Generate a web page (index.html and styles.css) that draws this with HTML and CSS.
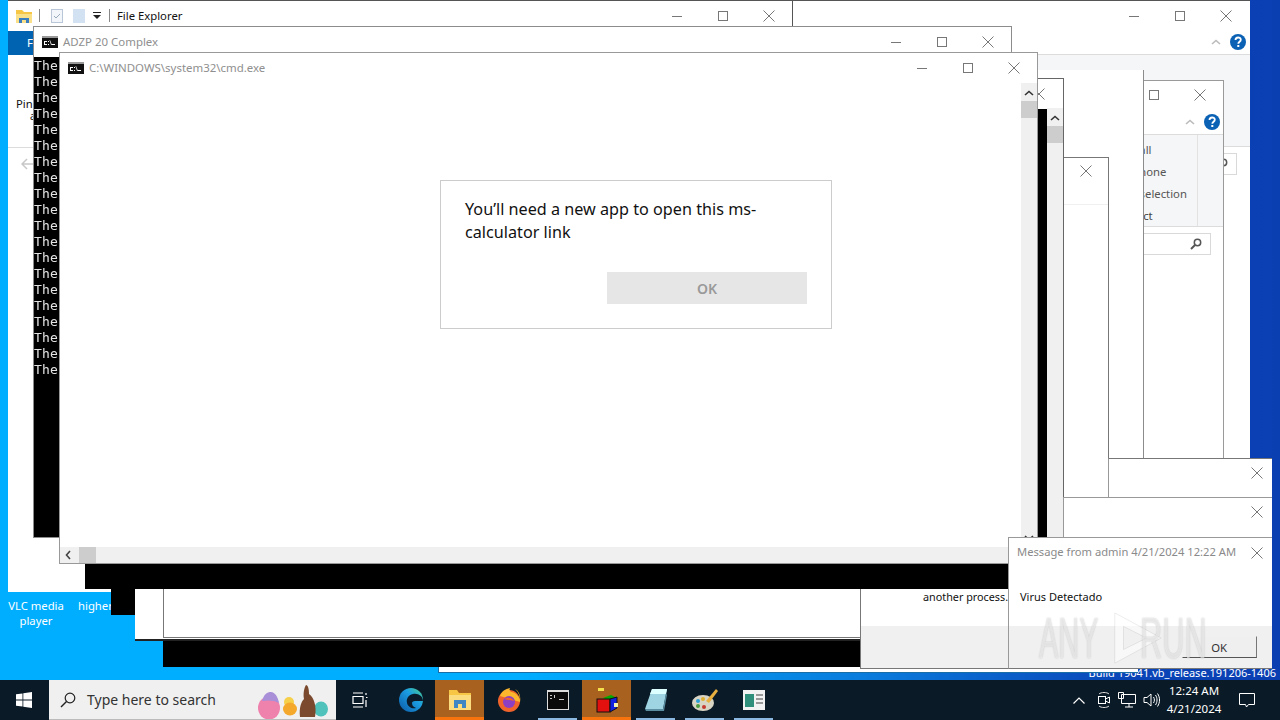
FILE: index.html
```html
<!DOCTYPE html>
<html lang="en">
<head>
  <meta charset="UTF-8" />
  <title>Desktop</title>
  <link rel="stylesheet" href="styles.css">
</head>
<body>
  <svg class="defs" width="0" height="0">
    <symbol id="i-close" viewBox="0 0 12 12"><path d="M.5.5l11 11M11.5.5l-11 11" fill="none" stroke="currentColor"/></symbol>
    <symbol id="i-max" viewBox="0 0 12 12"><rect x="1.5" y="1.5" width="9" height="9" fill="none" stroke="currentColor"/></symbol>
    <symbol id="i-min" viewBox="0 0 12 12"><path d="M1 6.5h10" fill="none" stroke="currentColor"/></symbol>
    <symbol id="i-up" viewBox="0 0 10 6"><path d="M1 5l4-3.5L9 5" fill="none" stroke="currentColor" stroke-width="1.6"/></symbol>
    <symbol id="i-cmd" viewBox="0 0 16 12"><rect width="16" height="12" fill="#111"/><rect width="16" height="2" fill="#999"/><path d="M2 5h3v1H3v2h2v1H2zM6 5h1v1H6zM6 8h1v1H6zM8 4l2 5h-1L7.500 4zM10 8h3v1h-3z" fill="#fff"/></symbol>
    <symbol id="i-search" viewBox="0 0 12 12"><circle cx="7.500" cy="4.500" r="3.200" fill="none" stroke="#555" stroke-width="1.500"/><path d="M5 7l-4 4" stroke="#555" stroke-width="2"/></symbol>
    <symbol id="i-help" viewBox="0 0 16 16"><circle cx="8" cy="8" r="8" fill="#0b62b5"/><path d="M5.500 6c0-3.300 5.300-3.300 5.300-.2 0 2-2.500 2-2.500 4" fill="none" stroke="#fff" stroke-width="1.800"/><rect x="7.300" y="11" width="2" height="2" fill="#fff"/></symbol>
  </svg>

  <div class="desktop">
    <span class="build-info">Build 19041.vb_release.191206-1406</span>

    <div class="icon-label vlc-label">VLC media player</div>
    <div class="icon-label higher-label">higher</div>

    <!-- explorer windows at the back -->
    <section class="win win-back">
      <div class="title-bar">
        <span class="spacer"></span>
        <span class="ctl"><svg class="ico"><use href="#i-min"/></svg></span>
        <span class="ctl"><svg class="ico"><use href="#i-max"/></svg></span>
        <span class="ctl"><svg class="ico"><use href="#i-close"/></svg></span>
      </div>
      <div class="tab-row">
        <svg class="ribbon-up"><use href="#i-up"/></svg>
        <svg class="help"><use href="#i-help"/></svg>
      </div>
      <div class="ribbon"></div>
      <div class="address-row"><div class="search-box"><svg class="search-ico"><use href="#i-search"/></svg></div></div>
    </section>

    <section class="win win-explorer">
      <div class="title-bar">
        <svg class="folder" viewBox="0 0 16 14">
          <path d="M0 1h6l2 2h8v11H0z" fill="#f6c644"/>
          <rect y="5" width="16" height="9" fill="#fbe08a"/>
          <path d="M3 14V9h10v5h-3v-3H6v3z" fill="#3a7ebf"/>
        </svg>
        <span class="qa-sep"></span>
        <svg class="qa-doc" viewBox="0 0 12 14"><rect x=".5" y=".5" width="11" height="13" fill="#f2f6fb" stroke="#b8c6d8"/><path d="M3 7l2 2 4-4" fill="none" stroke="#9ab" /></svg>
        <svg class="qa-doc qa-blank" viewBox="0 0 12 14"><rect width="12" height="14" fill="#d3e2f3"/></svg>
        <svg class="qa-drop" viewBox="0 0 8 7"><path d="M0 0h8v1H0zM0 3h8L4 7z" fill="#222"/></svg>
        <span class="qa-sep qa-sep-2"></span>
        <span class="title-dark">File Explorer</span>
        <span class="spacer"></span>
        <span class="ctl"><svg class="ico"><use href="#i-min"/></svg></span>
        <span class="ctl"><svg class="ico"><use href="#i-max"/></svg></span>
        <span class="ctl"><svg class="ico"><use href="#i-close"/></svg></span>
      </div>
      <div class="file-tab">F</div>
      <div class="pin-area">
        <span>Pin</span>
        <span class="pin-tail">a</span>
      </div>
      <div class="nav-row"><svg class="back-arrow" viewBox="0 0 14 12"><path d="M6 1L1 6l5 5M1 6h13" fill="none" stroke="#c8c8c8" stroke-width="1.500"/></svg></div>
    </section>

    <section class="win win-sliver"></section>

    <section class="win win-select">
      <div class="title-bar">
        <span class="spacer"></span>
        <span class="ctl"><svg class="ico"><use href="#i-max"/></svg></span>
        <span class="ctl"><svg class="ico"><use href="#i-close"/></svg></span>
      </div>
      <div class="tab-row">
        <svg class="ribbon-up"><use href="#i-up"/></svg>
        <svg class="help"><use href="#i-help"/></svg>
      </div>
      <div class="ribbon">
        <div class="select-group">
          <span>Select all</span>
          <span>Select none</span>
          <span>Invert selection</span>
          <span class="group-label">Select</span>
        </div>
      </div>
      <div class="address-row"><div class="search-box"><svg class="search-ico"><use href="#i-search"/></svg></div></div>
    </section>

    <section class="win win-blank-g"></section>

    <section class="win win-f">
      <div class="title-bar"><span class="spacer"></span><span class="ctl"><svg class="ico"><use href="#i-close"/></svg></span></div>
    </section>

    <section class="win win-h">
      <div class="title-bar"><span class="spacer"></span><span class="ctl"><svg class="ico"><use href="#i-close"/></svg></span></div>
      <div class="console-strip"></div>
      <div class="vscroll"><svg class="chev"><use href="#i-up"/></svg><div class="thumb"></div></div>
    </section>

    <section class="win win-c">
      <div class="title-bar"><span class="spacer"></span><span class="ctl"><svg class="ico"><use href="#i-close"/></svg></span></div>
    </section>
    <section class="win win-d">
      <div class="title-bar"><span class="spacer"></span><span class="ctl"><svg class="ico"><use href="#i-close"/></svg></span></div>
    </section>

    <!-- stack of cmd windows peeking out underneath -->
    <section class="win win-low-black"></section>
    <section class="win win-low-white"><div class="low-inner"></div></section>
    <section class="win win-bar-1"></section>
    <section class="win win-bar-2"></section>

    <section class="win win-process">
      <p class="process-text">another process.</p>
      <div class="msg-foot"></div>
    </section>

    <section class="win win-adzp">
      <div class="title-bar">
        <svg class="cmd-ico"><use href="#i-cmd"/></svg>
        <span class="title-grey">ADZP 20 Complex</span>
        <span class="spacer"></span>
        <span class="ctl"><svg class="ico"><use href="#i-min"/></svg></span>
        <span class="ctl"><svg class="ico"><use href="#i-max"/></svg></span>
        <span class="ctl"><svg class="ico"><use href="#i-close"/></svg></span>
      </div>
      <pre class="console">The
The
The
The
The
The
The
The
The
The
The
The
The
The
The
The
The
The
The
The</pre>
    </section>

    <section class="win win-main">
      <div class="title-bar">
        <svg class="cmd-ico"><use href="#i-cmd"/></svg>
        <span class="title-grey">C:\WINDOWS\system32\cmd.exe</span>
        <span class="spacer"></span>
        <span class="ctl"><svg class="ico"><use href="#i-min"/></svg></span>
        <span class="ctl"><svg class="ico"><use href="#i-max"/></svg></span>
        <span class="ctl"><svg class="ico"><use href="#i-close"/></svg></span>
      </div>
      <div class="main-body">
        <div class="vscroll"><svg class="chev"><use href="#i-up"/></svg><div class="thumb"></div><span class="spacer"></span><svg class="chev chev-down"><use href="#i-up"/></svg></div>
      </div>
      <div class="hscroll">
        <svg class="chev-left" viewBox="0 0 6 10"><path d="M5 1L1.500 5 5 9" fill="none" stroke="#444" stroke-width="1.600"/></svg>
        <div class="hthumb"></div>
      </div>
    </section>

    <div class="app-dialog">
      <p>You’ll need a new app to open this ms-calculator link</p>
      <div class="dialog-actions"><button class="dialog-ok">OK</button></div>
    </div>

    <section class="win win-message">
      <div class="title-bar">
        <span class="msg-title">Message from admin 4/21/2024 12:22 AM</span>
        <span class="spacer"></span>
        <span class="ctl"><svg class="ico"><use href="#i-close"/></svg></span>
      </div>
      <p class="msg-text">Virus Detectado</p>
      <div class="msg-foot"><button class="msg-ok">OK</button></div>
    </section>

    <div class="watermark">
      <span class="wm-word wm-any">ANY</span>
      <svg class="wm-play" viewBox="0 0 60 60"><path d="M6 4l48 26L6 56zM15 18v24l24-12z" fill="#fff" fill-opacity=".55" fill-rule="evenodd" stroke="#000" stroke-opacity=".08"/></svg>
      <span class="wm-word wm-run">RUN</span>
    </div>
  </div>

  <footer class="taskbar">
    <div class="start">
      <svg viewBox="0 0 16 16" width="16" height="16"><path d="M0 2.300l6.500-.9v6.200H0zM7.300 1.300L16 0v7.600H7.300zM0 8.400h6.500v6.200L0 13.700zM7.300 8.400H16V16l-8.700-1.200z" fill="#fff"/></svg>
    </div>
    <div class="search">
      <svg class="search-glass" viewBox="0 0 16 16"><circle cx="10" cy="6" r="4.800" fill="none" stroke="#222" stroke-width="1.200"/><path d="M6.500 9.500L1 15" stroke="#222" stroke-width="1.500"/></svg>
      <span>Type here to search</span>
      <svg class="easter" viewBox="0 0 78 36">
        <ellipse cx="11" cy="25" rx="11" ry="11.500" fill="#ee82ad"/>
        <path d="M4 18c2-7 5-9 9-9s7 5 8 11c-5-3-11-3-17-2z" fill="#a88fd8"/>
        <ellipse cx="63" cy="26" rx="7" ry="7.500" fill="#4fc2bb"/>
        <circle cx="31" cy="19" r="5" fill="#f6d04a"/>
        <ellipse cx="32" cy="26" rx="7" ry="6.500" fill="#f4a92c"/>
        <path d="M42 34c-1-9 1-15 4-18-1-5 0-11 2-14 2 0 3 4 3 9 5 3 8 13 6 23z" fill="#7b4a2e"/>
      </svg>
    </div>
    <div class="task-btn task-view">
      <svg viewBox="0 0 16 16" width="16" height="16"><path d="M1 1h10M1 15h10M1 4.500h10v7H1zM14 1v2M14 5.500h1.500M14 8v7" fill="none" stroke="#fff" stroke-width="1.200"/></svg>
    </div>
    <div class="task-btn">
      <svg viewBox="0 0 24 24" width="24" height="24">
        <defs><linearGradient id="edge-g" x1="0" y1="1" x2="1" y2="0"><stop offset="0" stop-color="#0c59a4"/><stop offset=".6" stop-color="#1b9de2"/><stop offset="1" stop-color="#4ed08b"/></linearGradient></defs>
        <circle cx="12" cy="12" r="12" fill="url(#edge-g)"/>
        <path d="M24 13c0-5-5-8-10-7-5 1-7 5-6 9 1 4 5 6 9 5-3-1-4-3-4-5 0-1 1-2 3-2h8z" fill="#0b1b29"/>
      </svg>
    </div>
    <div class="task-btn is-active">
      <svg viewBox="0 0 22 20" width="22" height="20"><path d="M0 0h8l2 3h12v17H0z" fill="#f6c644"/><rect y="5" width="22" height="15" fill="#fbdc7e"/><path d="M5 18v-8h12v8h-4v-4H9v4z" fill="#3f86c4"/></svg>
    </div>
    <div class="task-btn">
      <svg viewBox="0 0 24 24" width="24" height="24"><circle cx="12" cy="13" r="11" fill="#f0642c"/><path d="M3 8C5 3 8 1 13 0c-1 2 0 3 1 4 4 0 8 4 9 8 0-4-2-9-5-11 4 2 6 7 5 13z" fill="#fdb72c"/><circle cx="12" cy="14" r="6" fill="#8d3fc4"/><path d="M7 11c3-2 8-2 10 2-3-1-7-1-10-2z" fill="#f0642c"/></svg>
    </div>
    <div class="task-btn has-line">
      <svg viewBox="0 0 22 20" width="22" height="20"><rect width="22" height="20" fill="#ddd"/><rect x="1" y="2" width="20" height="17" fill="#0a0a0a"/><path d="M3 5h2v1H3zM3 8h2v1H3zM7 5h1v3H7zM12 9h5v1h-5z" fill="#ccc"/></svg>
    </div>
    <div class="task-btn is-active">
      <svg viewBox="0 0 26 26" width="26" height="26">
        <path d="M9 11l8-3 6 3-7 3z" fill="#0a0"/>
        <rect x="3" y="12" width="13" height="13" fill="#e31010" stroke="#111"/>
        <path d="M16 12l7-2v11l-7 4z" fill="#1220e0" stroke="#111"/>
        <path d="M4 1h6v3H4z" fill="#f4e04a"/><path d="M20 16h4v4h-4z" fill="#f7f4b0"/>
      </svg>
    </div>
    <div class="task-btn has-line">
      <svg viewBox="0 0 24 24" width="24" height="24"><path d="M8 1h15l-4 20H1z" fill="#9fd4e2"/><path d="M8 1h15l-1 5H6z" fill="#dff"/><path d="M1 21h18l3-16 1 2-3 16H2z" fill="#5a8ea0"/></svg>
    </div>
    <div class="task-btn has-line">
      <svg viewBox="0 0 26 24" width="26" height="24"><ellipse cx="11" cy="15" rx="11" ry="8" fill="#d9d5c4"/><circle cx="6" cy="13" r="2" fill="#2d9fd8"/><circle cx="11" cy="11" r="2" fill="#e0b030"/><circle cx="6" cy="18" r="2" fill="#4a9a40"/><circle cx="12" cy="19" r="2" fill="#c43a30"/><path d="M14 13L24 1l2 2-9 12z" fill="#e8b040"/></svg>
    </div>
    <div class="task-btn has-line">
      <svg viewBox="0 0 22 20" width="22" height="20"><rect width="22" height="20" fill="#f2f2f2"/><rect x="2" y="4" width="9" height="13" fill="#2f8f7a"/><path d="M13 4h7v2h-7zM13 8h7v2h-7zM13 12h7v2h-7z" fill="#999"/></svg>
    </div>
    <span class="spacer"></span>
    <div class="tray">
      <svg class="tray-chev" viewBox="0 0 12 7"><path d="M.5 6.500L6 1l5.500 5.500" fill="none" stroke="#fff" stroke-width="1.200"/></svg>
      <svg class="tray-ico" viewBox="0 0 14 18"><path d="M2 3c2-2 8-2 10 0M2 15c2 2 8 2 10 0" fill="none" stroke="#ddd"/><rect x="1.500" y="5.500" width="7" height="7" fill="none" stroke="#fff"/><path d="M8.500 8l4-2v6l-4-2" fill="none" stroke="#fff"/></svg>
      <svg class="tray-ico tray-net" viewBox="0 0 18 16"><path d="M3.500 2.500h14v9h-14zM7 15h8M11 11.500V15M.5.500h5v6h-5z" fill="#0b1b29" stroke="#fff"/></svg>
      <svg class="tray-ico tray-vol" viewBox="0 0 17 16"><path d="M1 5.500h3L8 2v12L4 10.500H1z" fill="none" stroke="#fff"/><path d="M10.500 5c1.200 2 1.200 4 0 6M12.500 3c2 3 2 7 0 10M14.500 1.500c2.700 4 2.700 9 0 13" fill="none" stroke="#fff"/></svg>
      <div class="clock"><span>12:24 AM</span><span>4/21/2024</span></div>
      <svg class="notify" viewBox="0 0 16 16"><path d="M.5 1.500h15v11H9.500L7.500 15l-1-2.500h-6z" fill="none" stroke="#fff"/></svg>
    </div>
  </footer>
</body>
</html>
```

FILE: styles.css
```css
* {
  margin: 0;
  padding: 0;
  box-sizing: border-box;
}

html, body {
  width: 1280px;
  height: 720px;
  overflow: hidden;
}

body {
  font-family: "Noto Sans", "Open Sans", sans-serif;
  font-size: 11.300px;
  color: #111;
}

.defs {
  position: absolute;
}

.spacer {
  flex: 1;
}

.desktop {
  position: relative;
  height: 680px;
  overflow: hidden;
  background: linear-gradient(90deg, #00aeff 0%, #00aeff 40%, #0a7bdc 68%, #0a45b8 88%, #0a3fb2 100%);
}

.build-info {
  position: absolute;
  right: 4px;
  top: 665px;
  color: #fff;
  font-size: 11px;
}

.icon-label {
  position: absolute;
  color: #fff;
  text-align: center;
  line-height: 15px;
}

.vlc-label {
  left: 6px;
  top: 598px;
  width: 60px;
}

.higher-label {
  left: 78px;
  top: 598px;
}

/* windows */
.win {
  position: absolute;
  background: #fff;
  border: 1px solid #8c8c8c;
}

.title-bar {
  display: flex;
  align-items: center;
  height: 29px;
  flex-shrink: 0;
}

.ctl {
  width: 46px;
  height: 29px;
  display: flex;
  align-items: center;
  justify-content: center;
  color: #777;
}

.ico {
  width: 12px;
  height: 12px;
}

.title-grey {
  color: #8f8f8f;
  font-size: 11.450px;
  margin: 0 0 2px 5px;
}

.title-dark {
  color: #111;
  font-size: 11.300px;
}

.cmd-ico {
  width: 16px;
  height: 12px;
  margin-left: 8px;
}

.win-back {
  left: 792px;
  top: 0;
  width: 458px;
  height: 592px;
  border-width: 1px 0 0 1px;
  border-color: #555;
}

.win-back .title-bar {
  padding-right: 1px;
}

.tab-row {
  display: flex;
  align-items: center;
  justify-content: flex-end;
  height: 25px;
  padding-right: 4px;
  gap: 9px;
  border-bottom: 1px solid #dcdcdc;
}

.ribbon-up {
  width: 10px;
  height: 6px;
  color: #bbb;
}

.help {
  width: 16px;
  height: 16px;
}

.win-back .ribbon {
  height: 92px;
  background: #f5f6f7;
  border-bottom: 1px solid #dcdcdc;
}

.address-row {
  display: flex;
  justify-content: flex-end;
}

.win-back .address-row {
  padding: 6px 13px 0 0;
}

.search-box {
  width: 200px;
  height: 22px;
  border: 1px solid #d9d9d9;
  display: flex;
  align-items: center;
  justify-content: flex-end;
  padding-right: 8px;
}

.win-back .search-box {
  padding-right: 0;
  justify-content: flex-start;
  padding-left: 178px;
}

.search-ico {
  width: 12px;
  height: 12px;
  flex-shrink: 0;
}

.win-explorer {
  left: 8px;
  top: 0;
  width: 785px;
  height: 592px;
  border-width: 1px 1px 0 0;
  border-color: #555;
}

.win-explorer .title-bar {
  height: 29px;
  padding-left: 8px;
}

.folder {
  width: 16px;
  height: 14px;
}

.qa-sep {
  width: 1px;
  height: 13px;
  background: #888;
  margin: 0 11px 0 7px;
}

.qa-sep-2 {
  margin: 0 7px 0 8px;
}

.qa-doc {
  width: 12px;
  height: 14px;
  margin-right: 10px;
}

.qa-blank {
  margin-right: 7px;
}

.qa-drop {
  width: 8px;
  height: 7px;
  margin-left: 1px;
}

.file-tab {
  position: absolute;
  left: 0;
  top: 30px;
  width: 40px;
  height: 24px;
  background: #0063b1;
  color: #fff;
  padding: 4px 0 0 19px;
}

.pin-area {
  position: absolute;
  left: 8px;
  top: 95px;
  display: flex;
  flex-direction: column;
  line-height: 15px;
}

.pin-tail {
  margin: -2px 0 0 14px;
  font-size: 10px;
}

.nav-row {
  position: absolute;
  left: 0;
  right: 0;
  top: 146px;
  border-top: 1px solid #dcdcdc;
  padding: 10px 0 0 13px;
}

.back-arrow {
  display: block;
  width: 14px;
  height: 12px;
}

.win-sliver {
  left: 438px;
  top: 600px;
  width: 700px;
  height: 73px;
  border-color: #1a6ea8;
  border-width: 0 0 1px 1px;
}

.win-select {
  left: 900px;
  top: 80px;
  width: 324px;
  height: 379px;
  border-color: #9a9a9a;
}

.win-select .title-bar {
  height: 27px;
}

.win-select .ctl {
  height: 27px;
}

.win-select .tab-row {
  height: 27px;
  padding: 2px 3px 0 0;
}

.win-select .ribbon {
  height: 92px;
  background: #f5f6f7;
  border-bottom: 1px solid #dcdcdc;
  padding-left: 204px;
  position: relative;
}

.select-group {
  display: flex;
  flex-direction: column;
  width: 93px;
  height: 91px;
  padding-top: 4px;
  line-height: 22px;
  color: #555;
  border-right: 1px solid #e2e2e2;
}

.group-label {
  text-align: center;
  color: #444;
  padding-right: 28px;
}

.win-select .address-row {
  padding: 6px 12px 0 0;
}

.win-blank-g {
  left: 1000px;
  top: 70px;
  width: 144px;
  height: 389px;
  border-width: 0 1px 0 0;
  border-color: #8c8c8c;
}

.win-h {
  left: 900px;
  top: 78px;
  width: 164px;
  height: 470px;
  border-color: #666;
}

.win-h .title-bar {
  height: 29px;
  padding-right: 1px;
}

.console-strip {
  position: absolute;
  left: 136px;
  top: 30px;
  width: 10px;
  bottom: 0;
  background: #000;
}

.vscroll {
  display: flex;
  flex-direction: column;
  align-items: center;
  background: #f0f0f0;
  width: 16px;
}

.win-h .vscroll {
  position: absolute;
  right: 0;
  top: 29px;
  bottom: 0;
}

.chev {
  width: 10px;
  height: 6px;
  color: #333;
  margin: 7px 0 5px;
  flex-shrink: 0;
}

.chev-down {
  transform: rotate(180deg);
  margin: 0 0 6px;
}

.thumb {
  width: 16px;
  height: 17px;
  background: #cdcdcd;
  flex-shrink: 0;
}

.win-f {
  left: 1000px;
  top: 157px;
  width: 109px;
  height: 341px;
  border-color: #777;
}

.win-f .title-bar {
  height: 47px;
  align-items: flex-start;
  border-bottom: 1px solid #f0f0f0;
}

.win-f .ctl {
  width: 45px;
  height: 26px;
}

.win-c {
  left: 1108px;
  top: 458px;
  width: 164px;
  height: 60px;
  border-width: 1px 0 0 1px;
  border-color: #777 #999;
}

.win-d {
  left: 1063px;
  top: 497px;
  width: 209px;
  height: 60px;
  border-width: 1px 0 0 1px;
  border-color: #999;
}

.win-c .title-bar, .win-d .title-bar {
  height: 28px;
}

.win-c .ctl, .win-d .ctl {
  width: 30px;
  height: 28px;
}

.win-low-black {
  left: 163px;
  top: 600px;
  width: 900px;
  height: 67px;
  background: #000;
  border: 0;
}

.win-low-white {
  left: 135px;
  top: 570px;
  width: 800px;
  height: 71px;
  border: 0;
  border-bottom: 2px solid #222;
}

.low-inner {
  position: absolute;
  left: 28px;
  top: 0;
  right: 0;
  height: 68px;
  border-left: 1px solid #777;
  border-bottom: 1px solid #777;
}

.win-bar-1 {
  left: 85px;
  top: 540px;
  width: 930px;
  height: 49px;
  background: #000;
  border: 0;
}

.win-bar-2 {
  left: 111px;
  top: 585px;
  width: 24px;
  height: 30px;
  background: #000;
  border: 0;
}

.win-process {
  left: 860px;
  top: 589px;
  width: 160px;
  height: 80px;
  border-width: 0 0 1px 1px;
  border-color: #777;
}

.process-text {
  margin: 1px 0 0 62px;
  font-size: 10.800px;
  line-height: 14px;
  white-space: nowrap;
  color: #111;
}

.win-process .msg-foot {
  position: absolute;
  left: 0;
  right: 0;
  bottom: 0;
  height: 42px;
  background: #f0f0f0;
}

.win-adzp {
  left: 33px;
  top: 26px;
  width: 979px;
  height: 512px;
  border-color: #8c8c8c;
}

.win-adzp .title-bar {
  height: 30px;
}

.console {
  background: #000;
  color: #e4e4e4;
  height: 480px;
  font-family: "DejaVu Sans Mono", monospace;
  font-size: 13px;
  line-height: 16px;
  letter-spacing: .2px;
  padding-top: 1px;
  overflow: hidden;
  filter: grayscale(1);
}

.win-main {
  display: flex;
  flex-direction: column;
  left: 59px;
  top: 52px;
  width: 979px;
  height: 512px;
  border-color: #999;
}

.win-main .title-bar {
  height: 30px;
}

.main-body {
  flex: 1;
  display: flex;
  justify-content: flex-end;
}

.win-main .vscroll {
  width: 16px;
}

.hscroll {
  display: flex;
  align-items: center;
  height: 16px;
  background: #f0f0f0;
  flex-shrink: 0;
}

.chev-left {
  width: 6px;
  height: 10px;
  margin: 0 8px 0 5px;
}

.hthumb {
  width: 17px;
  height: 16px;
  background: #cdcdcd;
}

.app-dialog {
  position: absolute;
  left: 440px;
  top: 180px;
  width: 392px;
  height: 149px;
  background: #fff;
  border: 1px solid #ccc;
  padding: 17px 24px 24px;
}

.app-dialog p {
  font-size: 16.200px;
  line-height: 23px;
  color: #111;
}

.dialog-actions {
  display: flex;
  justify-content: flex-end;
  margin-top: 28px;
}

.dialog-ok {
  width: 200px;
  height: 32px;
  border: 0;
  background: #e6e6e6;
  color: #999;
  font-family: inherit;
  font-size: 14px;
  font-weight: 600;
}

.win-message {
  left: 1008px;
  top: 537px;
  width: 264px;
  height: 132px;
  border-width: 1px 0 1px 1px;
  border-color: #999 #999 #777;
}

.msg-title {
  margin: 0 0 2px 8px;
  color: #8a8a8a;
  font-size: 11.200px;
  white-space: nowrap;
}

.win-message .ctl {
  width: 30px;
}

.msg-text {
  margin: 22px 0 0 11px;
  font-size: 11px;
  line-height: 16px;
}

.win-message .msg-foot {
  position: absolute;
  left: 0;
  right: 0;
  bottom: 0;
  height: 42px;
  background: #f0f0f0;
  display: flex;
  justify-content: flex-end;
  align-items: center;
  padding-right: 15px;
}

.msg-ok {
  width: 75px;
  height: 22px;
  background: #efefef;
  border: 1px solid;
  border-color: #f0f0f0 #777 #555 #f0f0f0;
  font-family: inherit;
  font-size: 11.300px;
  color: #333;
  text-align: right;
  padding-right: 29px;
}

.watermark {
  position: absolute;
  left: 1037px;
  top: 608px;
  width: 200px;
  height: 60px;
  pointer-events: none;
}

.wm-word {
  position: absolute;
  top: 0;
  font-family: "Liberation Sans", sans-serif;
  font-size: 58px;
  line-height: 60px;
  color: rgba(255, 255, 255, .6);
  text-shadow: 0 0 2px rgba(0, 0, 0, .25);
  transform-origin: left center;
}

.wm-any {
  left: 2px;
  transform: scaleX(.5);
}

.wm-run {
  left: 103px;
  transform: scaleX(.53);
}

.wm-play {
  position: absolute;
  left: 72px;
  top: 0;
  width: 58px;
  height: 60px;
}

/* taskbar */
.taskbar {
  display: flex;
  align-items: stretch;
  height: 40px;
  background: #0a1a26;
  color: #fff;
}

.start {
  width: 48px;
  display: flex;
  align-items: center;
  justify-content: center;
}

.search {
  position: relative;
  width: 287px;
  margin-left: 1px;
  display: flex;
  align-items: center;
  background: #f0f0f0;
  border-bottom: 1px solid #bbb;
  color: #333;
  font-size: 14px;
}

.search-glass {
  width: 16px;
  height: 16px;
  margin: 0 11px 0 11px;
}

.easter {
  position: absolute;
  right: 0;
  bottom: 0;
  width: 78px;
  height: 36px;
}

.task-btn {
  position: relative;
  width: 49px;
  display: flex;
  align-items: center;
  justify-content: center;
}

.task-view {
  width: 48px;
  margin-right: 2px;
}

.is-active {
  background: #a8611f;
}

.is-active::after {
  content: "";
  position: absolute;
  left: 0;
  right: 0;
  bottom: 0;
  height: 3px;
  background: #f7730e;
}

.has-line::after {
  content: "";
  position: absolute;
  left: 5px;
  right: 5px;
  bottom: 0;
  height: 2px;
  background: #8ab8e0;
}

.tray {
  display: flex;
  align-items: center;
}

.tray-chev {
  width: 12px;
  height: 7px;
  margin-right: 12px;
}

.tray-ico {
  width: 14px;
  height: 18px;
  margin-right: 7px;
}

.tray-net {
  width: 18px;
  height: 16px;
  margin-right: 7px;
}

.tray-vol {
  width: 17px;
  height: 16px;
  margin-right: 6px;
}

.clock {
  display: flex;
  flex-direction: column;
  align-items: center;
  width: 56px;
  font-size: 11.500px;
  line-height: 18px;
}

.notify {
  width: 16px;
  height: 16px;
  margin: 0 25px 0 17px;
}
```
